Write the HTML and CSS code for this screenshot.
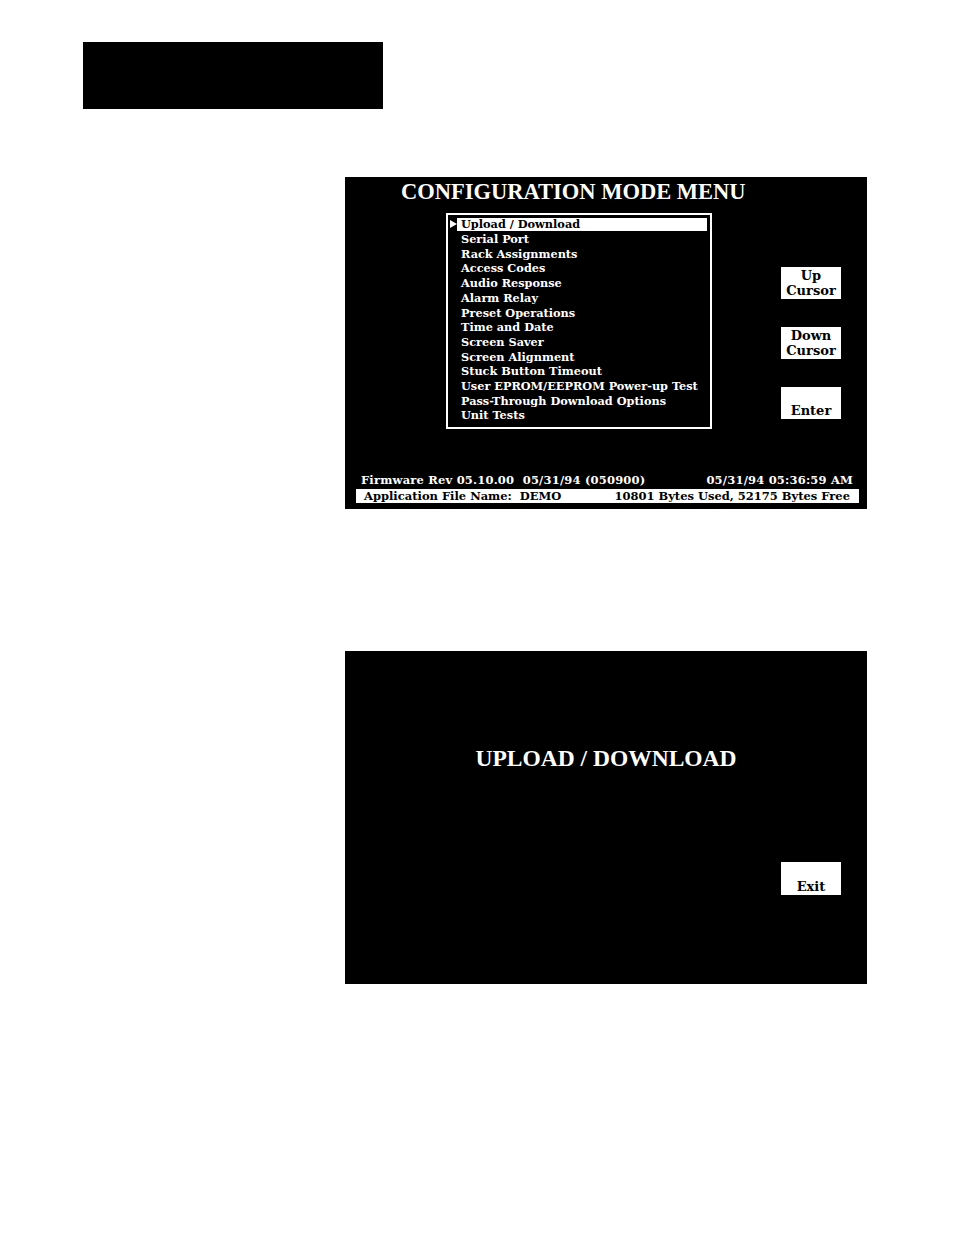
FILE: index.html
```html
<!DOCTYPE html>
<html lang="en">
<head>
    <meta charset="UTF-8">
    <title>Configuration Mode Menu</title>
    <link rel="stylesheet" href="styles.css">
</head>
<body>
    <div class="page">
        <div class="tab-block"></div>

        <div class="screen screen-menu">
            <h1 class="screen-title">CONFIGURATION MODE MENU</h1>
            <div class="screen-body">
                <ul class="menu">
                    <li class="menu-item selected">Upload / Download</li>
                    <li class="menu-item">Serial Port</li>
                    <li class="menu-item">Rack Assignments</li>
                    <li class="menu-item">Access Codes</li>
                    <li class="menu-item">Audio Response</li>
                    <li class="menu-item">Alarm Relay</li>
                    <li class="menu-item">Preset Operations</li>
                    <li class="menu-item">Time and Date</li>
                    <li class="menu-item">Screen Saver</li>
                    <li class="menu-item">Screen Alignment</li>
                    <li class="menu-item">Stuck Button Timeout</li>
                    <li class="menu-item">User EPROM/EEPROM Power-up Test</li>
                    <li class="menu-item">Pass-Through Download Options</li>
                    <li class="menu-item">Unit Tests</li>
                </ul>
                <div class="keys">
                    <div class="key">Up<br>Cursor</div>
                    <div class="key">Down<br>Cursor</div>
                    <div class="key">Enter</div>
                </div>
            </div>
            <div class="status">
                <div class="status-line status-top">
                    <span>Firmware Rev 05.10.00&nbsp; 05/31/94 (050900)</span>
                    <span>05/31/94 05:36:59 AM</span>
                </div>
                <div class="status-line status-bar">
                    <span>Application File Name:&nbsp; DEMO</span>
                    <span>10801 Bytes Used, 52175 Bytes Free</span>
                </div>
            </div>
        </div>

        <div class="screen screen-upload">
            <h1 class="screen-title centered">UPLOAD / DOWNLOAD</h1>
            <div class="keys exit-keys">
                <div class="key">Exit</div>
            </div>
        </div>
    </div>
</body>
</html>
```

FILE: styles.css
```css
body {
    margin: 0;
    background: #fff;
    font-family: 'DejaVu Serif', 'Liberation Serif', serif;
    font-weight: bold;
}

.page {
    width: 954px;
    height: 1235px;
    padding-top: 42px;
    box-sizing: border-box;
}

.tab-block {
    width: 300px;
    height: 67px;
    margin-left: 83px;
    background: #000;
}

.screen {
    width: 522px;
    margin-left: 345px;
    background: #000;
    color: #fff;
    box-sizing: border-box;
}

.screen-menu {
    height: 332px;
    margin-top: 68px;
    display: flex;
    flex-direction: column;
}

.screen-upload {
    height: 333px;
    margin-top: 142px;
    padding-top: 92px;
}

.screen-title {
    margin: 0;
    font-family: 'Liberation Serif', serif;
    font-size: 22.5px;
    line-height: 30px;
    font-weight: bold;
    padding-left: 56px;
}

.screen-title.centered {
    padding-left: 0;
    text-align: center;
    font-size: 23.5px;
}

.screen-body {
    display: flex;
    margin-top: 6px;
}

.menu {
    list-style: none;
    margin: 0 0 0 101px;
    padding: 3px 3px 3px 9px;
    width: 266px;
    height: 216px;
    box-sizing: border-box;
    border: 2px solid #fff;
}

.menu-item {
    font-size: 11.3px;
    line-height: 14.7px;
    padding-left: 4px;
    white-space: nowrap;
}

.menu-item.selected {
    position: relative;
    background: #fff;
    color: #000;
    height: 13px;
    line-height: 13px;
    margin-bottom: 1px;
}

.menu-item.selected::before {
    content: '';
    position: absolute;
    left: -7px;
    top: 2px;
    border-left: 7px solid #fff;
    border-top: 4px solid transparent;
    border-bottom: 4px solid transparent;
}

.keys {
    display: flex;
    flex-direction: column;
    gap: 28px;
    margin-left: auto;
    margin-right: 26px;
    padding-top: 54px;
}

.key {
    width: 60px;
    height: 32px;
    background: #fff;
    color: #000;
    font-size: 13px;
    line-height: 15px;
    text-align: center;
    display: flex;
    flex-direction: column;
    justify-content: flex-end;
    padding-bottom: 1px;
    box-sizing: border-box;
}

.exit-keys {
    align-items: flex-end;
    padding-top: 89px;
}

.exit-keys .key {
    height: 33px;
}

.status {
    margin-top: auto;
    padding: 0 8px 6px 11px;
    font-size: 11.5px;
    line-height: 14px;
}

.status-line {
    display: flex;
    justify-content: space-between;
    padding: 0 6px 0 5px;
}

.status-top {
    line-height: 13px;
    padding-bottom: 2px;
    letter-spacing: 0.2px;
}

.status-bar {
    background: #fff;
    color: #000;
    padding: 0 9px 0 8px;
}
```
